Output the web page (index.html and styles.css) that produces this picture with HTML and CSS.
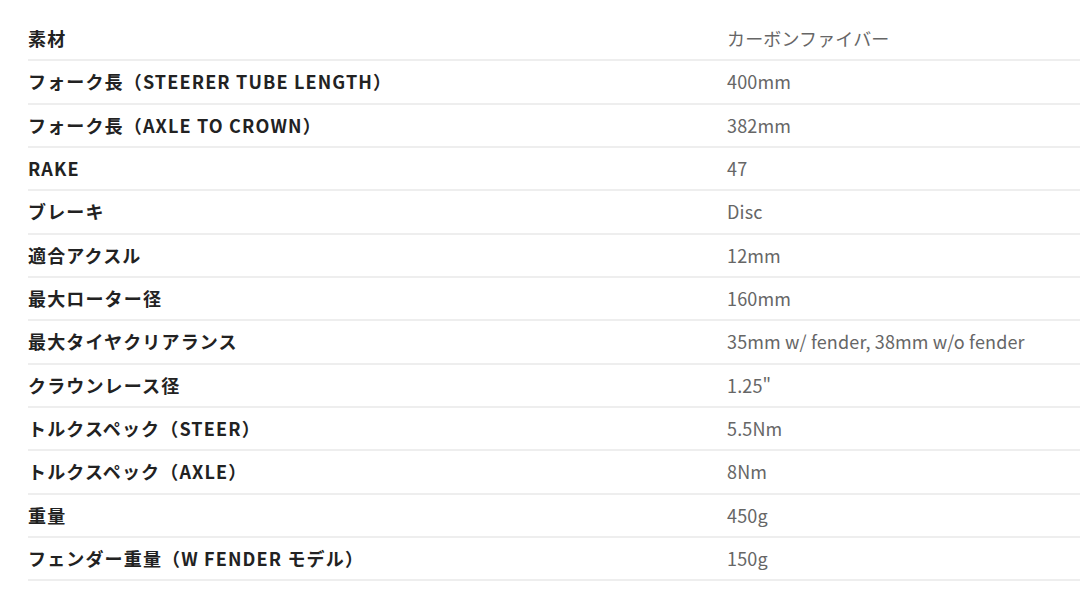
FILE: index.html
```html
<!DOCTYPE html>
<html lang="ja">
<head>
<meta charset="utf-8">
<link rel="stylesheet" href="styles.css">
</head>
<body>
<div class="specs">
  <div class="row"><div class="label">素材</div><div class="value">カーボンファイバー</div></div>
  <div class="row"><div class="label">フォーク長（STEERER TUBE LENGTH）</div><div class="value">400mm</div></div>
  <div class="row"><div class="label">フォーク長（AXLE TO CROWN）</div><div class="value">382mm</div></div>
  <div class="row"><div class="label">RAKE</div><div class="value">47</div></div>
  <div class="row"><div class="label">ブレーキ</div><div class="value">Disc</div></div>
  <div class="row"><div class="label">適合アクスル</div><div class="value">12mm</div></div>
  <div class="row"><div class="label">最大ローター径</div><div class="value">160mm</div></div>
  <div class="row"><div class="label">最大タイヤクリアランス</div><div class="value">35mm w/ fender, 38mm w/o fender</div></div>
  <div class="row"><div class="label">クラウンレース径</div><div class="value">1.25"</div></div>
  <div class="row"><div class="label">トルクスペック（STEER）</div><div class="value">5.5Nm</div></div>
  <div class="row"><div class="label">トルクスペック（AXLE）</div><div class="value">8Nm</div></div>
  <div class="row"><div class="label">重量</div><div class="value">450g</div></div>
  <div class="row"><div class="label">フェンダー重量（W FENDER モデル）</div><div class="value">150g</div></div>
</div>
</body>
</html>
```
FILE: styles.css
```css
html, body {
  margin: 0;
  padding: 0;
  background: #fff;
}
body {
  font-family: "Noto Sans CJK JP", "Noto Sans", sans-serif;
  font-size: 18px;
}
.specs {
  padding: 18px 0 0 28px;
}
.row {
  display: grid;
  grid-template-columns: 699px 1fr;
  padding: 7px 0;
  line-height: 27.33px;
  border-bottom: 2px solid #eeeeee;
}
.label {
  font-weight: 700;
  color: #222;
  letter-spacing: 1.15px;
}
.value {
  color: #666;
  font-weight: 400;
  letter-spacing: 0.15px;
}
```
